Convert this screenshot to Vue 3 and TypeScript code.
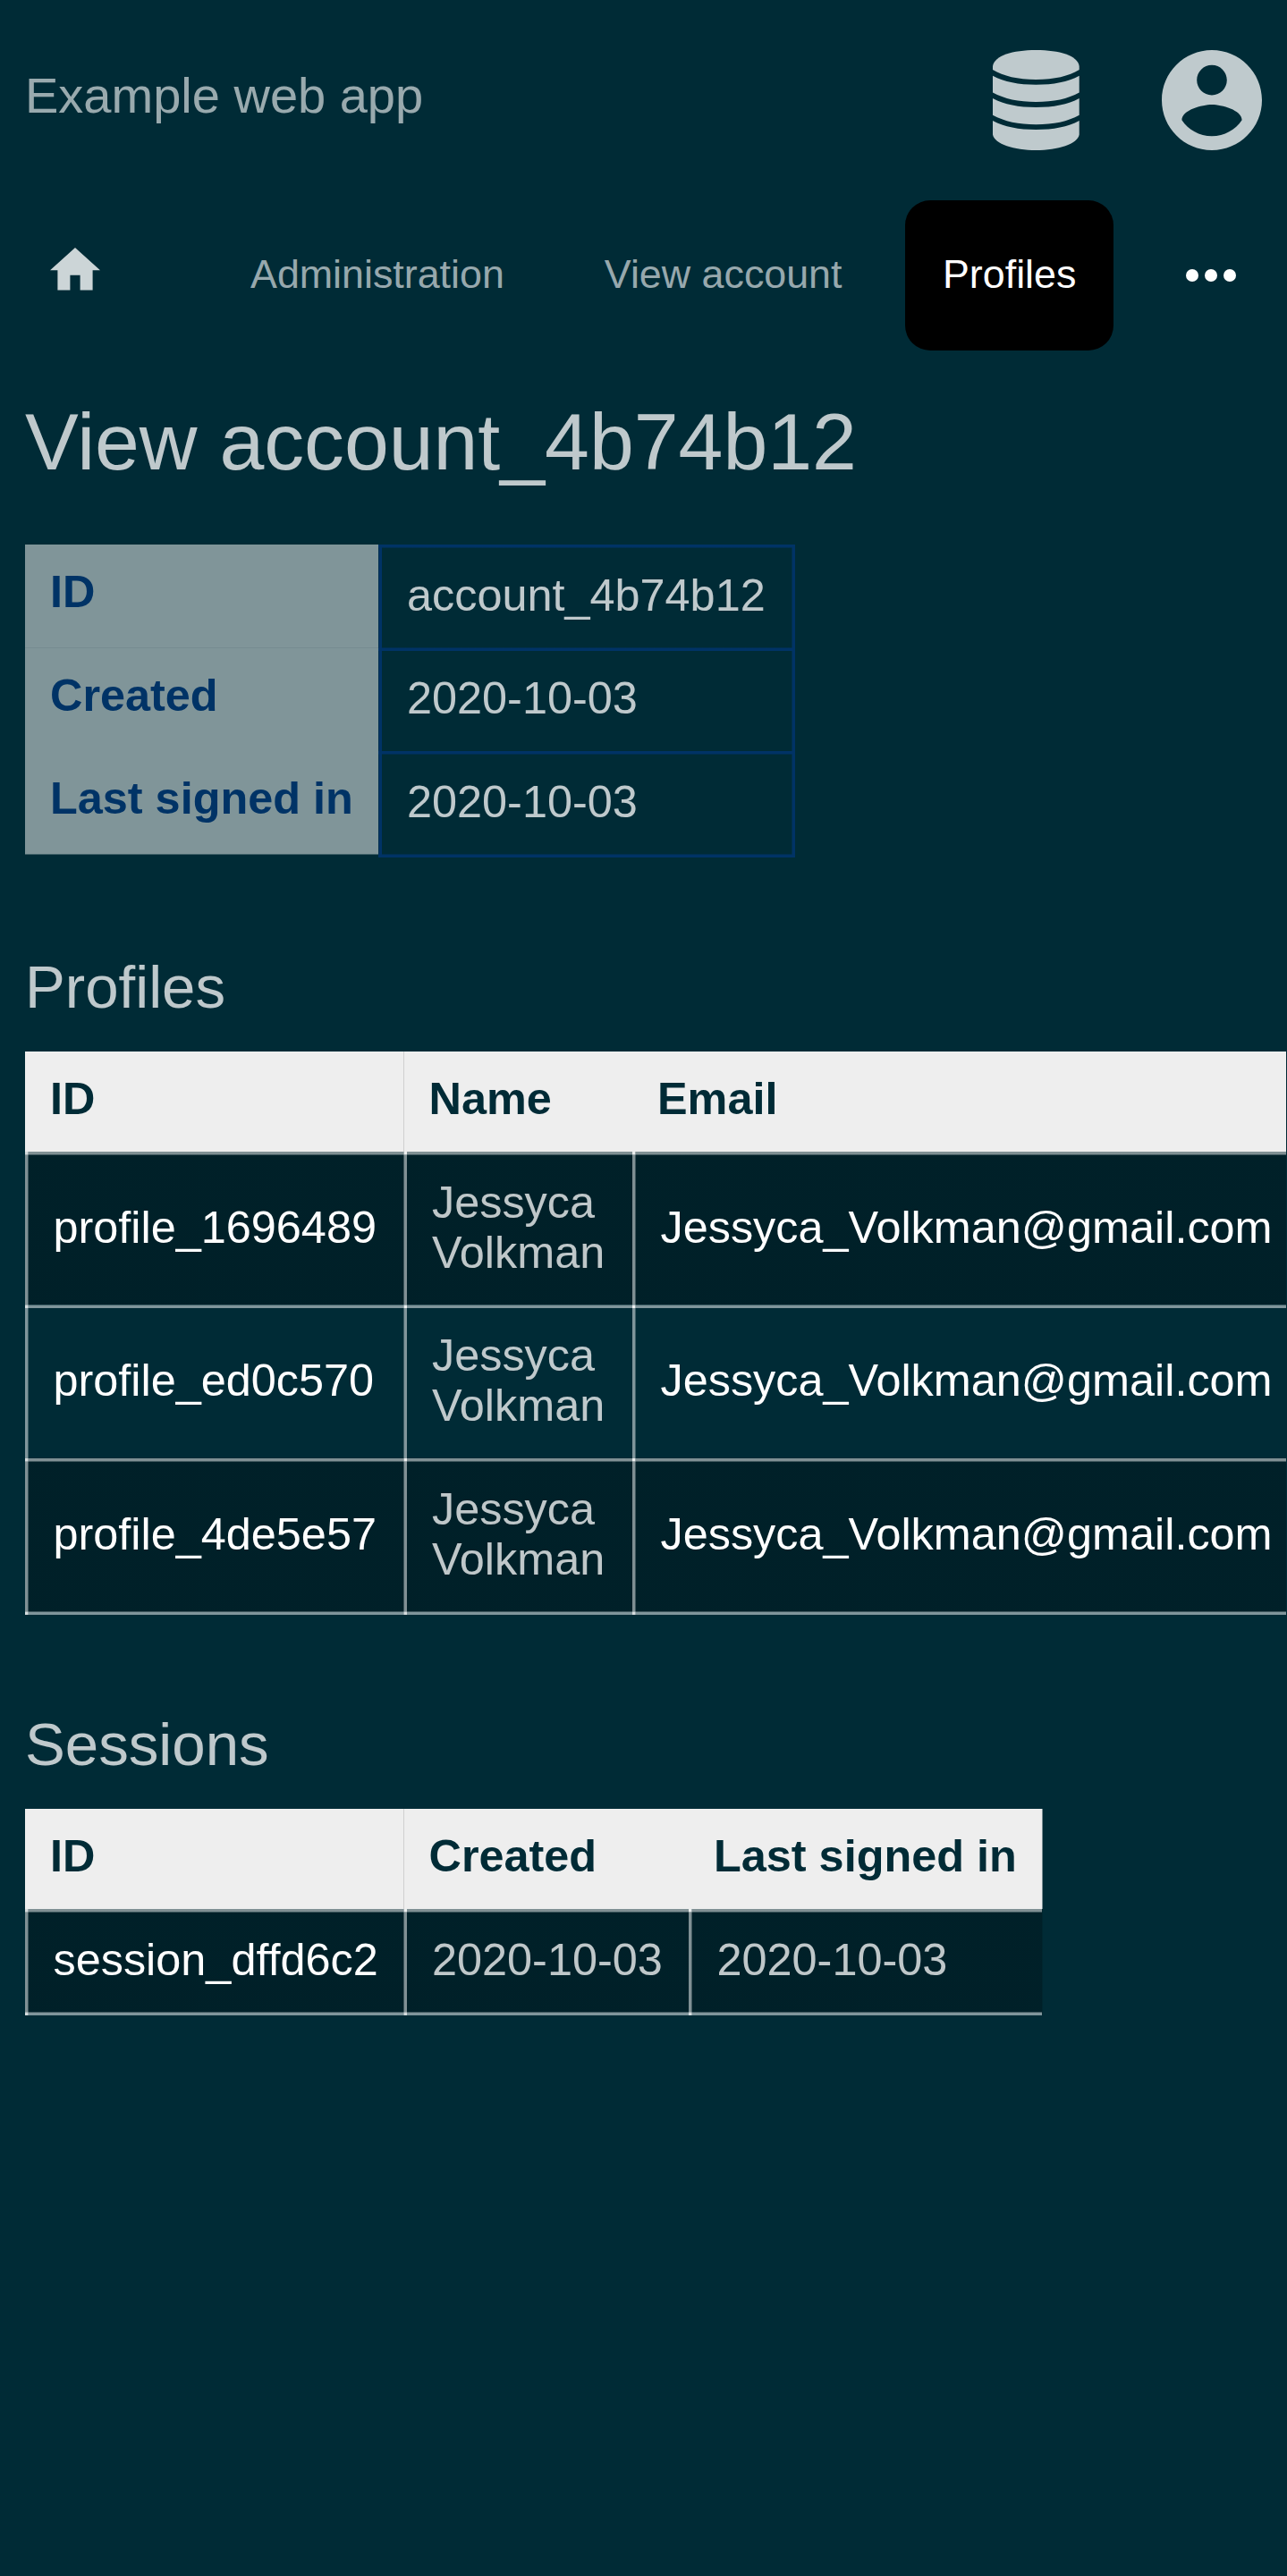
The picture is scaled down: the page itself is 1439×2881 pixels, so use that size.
<script setup lang="ts">
interface Row {
  edge: 'lead' | 'trail'
  height: string
  id: string
}
interface Profile extends Row {
  first: string
  last: string
  email: string
}

const tabs: { label: string; active: boolean }[] = [
  { label: 'Administration', active: false },
  { label: 'View account', active: false },
  { label: 'Profiles', active: true },
]

const details: { label: string; value: string; row: string }[] = [
  { label: 'ID', value: 'account_4b74b12', row: 'd1' },
  { label: 'Created', value: '2020-10-03', row: 'd2' },
  { label: 'Last signed in', value: '2020-10-03', row: 'd3' },
]

const profiles: Profile[] = [
  { id: 'profile_1696489', first: 'Jessyca', last: 'Volkman', email: 'Jessyca_Volkman@gmail.com', edge: 'lead', height: 'h171' },
  { id: 'profile_ed0c570', first: 'Jessyca', last: 'Volkman', email: 'Jessyca_Volkman@gmail.com', edge: 'trail', height: 'h172' },
  { id: 'profile_4de5e57', first: 'Jessyca', last: 'Volkman', email: 'Jessyca_Volkman@gmail.com', edge: 'lead', height: 'h175' },
]
</script>

<template>
  <div class="page">
    <header class="top">
      <div class="brand">Example web app</div>
      <svg class="db" width="97" height="112" viewBox="0 0 97 112">
        <path d="M0 18C2 6 22 0 48.400 0S95 6 96.700 18V22C85 29 69 33 48.400 33S12 29 0 22Z" />
        <path d="M0 28.700C13 35.500 29 38.700 48.400 38.700S84 35.500 96.700 28.700V47.500C84 54.500 68 58 48.400 58S13 54.500 0 47.500Z" />
        <path d="M0 53.900C13 60.700 29 63.900 48.400 63.900S84 60.700 96.700 53.900V72.700C84 79.700 68 83.200 48.400 83.200S13 79.700 0 72.700Z" />
        <path d="M0 79.100C13 85.900 29 89.100 48.400 89.100S84 85.900 96.700 79.100V94.500C95 105 73 112 48.400 112S2 105 0 94.500Z" />
      </svg>
      <svg class="user" width="112" height="112" viewBox="2 2 20 20">
        <path d="M12 2C6.480 2 2 6.480 2 12s4.480 10 10 10 10-4.480 10-10S17.520 2 12 2zm0 3c1.660 0 3 1.340 3 3s-1.340 3-3 3-3-1.340-3-3 1.340-3 3-3zm0 14.200c-2.500 0-4.710-1.280-6-3.220.03-1.990 4-3.080 6-3.080 1.990 0 5.970 1.090 6 3.080-1.290 1.940-3.500 3.220-6 3.220z" />
      </svg>
    </header>

    <nav class="nav">
      <svg class="home" width="56" height="47.600" viewBox="2 3 20 17">
        <path d="M10 20v-6h4v6h5v-8h3L12 3 2 12h3v8z" />
      </svg>
      <div class="tabs">
        <a v-for="t in tabs" :key="t.label" class="tab" :class="{ active: t.active }">{{ t.label }}</a>
      </div>
      <svg class="more" width="56" height="16" viewBox="0 0 56 16">
        <circle cx="7" cy="8" r="7" />
        <circle cx="28" cy="8" r="7" />
        <circle cx="49" cy="8" r="7" />
      </svg>
    </nav>

    <h1>View account_4b74b12</h1>

    <table class="details">
      <colgroup><col class="k" /><col class="v" /></colgroup>
      <tbody>
        <tr v-for="d in details" :key="d.label" :class="d.row">
          <th>{{ d.label }}</th>
          <td>{{ d.value }}</td>
        </tr>
      </tbody>
    </table>

    <h2 class="h-profiles">Profiles</h2>
    <table class="list profiles">
      <colgroup><col class="c1" /><col class="c2" /><col class="c3" /></colgroup>
      <thead>
        <tr><th>ID</th><th class="seam">Name</th><th>Email</th></tr>
      </thead>
      <tbody>
        <tr v-for="p in profiles" :key="p.id" :class="[p.edge, p.height]">
          <td class="a mid"><a>{{ p.id }}</a></td>
          <td class="b">{{ p.first }}<br />{{ p.last }}</td>
          <td class="a mid"><a>{{ p.email }}</a></td>
        </tr>
      </tbody>
    </table>

    <h2 class="h-sessions">Sessions</h2>
    <table class="list sessions">
      <colgroup><col class="c1" /><col class="c2" /><col class="c3" /></colgroup>
      <thead>
        <tr><th>ID</th><th class="seam">Created</th><th>Last signed in</th></tr>
      </thead>
      <tbody>
        <tr class="lead h119">
          <td class="a"><a>session_dffd6c2</a></td>
          <td class="b">2020-10-03</td>
          <td class="a">2020-10-03</td>
        </tr>
      </tbody>
    </table>
  </div>
</template>

<style>
body {
  margin: 0;
  background: #002b36;
}
</style>

<style scoped>
.page {
  box-sizing: border-box;
  width: 1439px;
  height: 2881px;
  padding: 0 0 0 28px;
  overflow: hidden;
  background: #002b36;
  color: rgba(255, 255, 255, 0.75);
  font: 50.4px/56px "Liberation Sans", Arial, sans-serif;
}
.top {
  display: flex;
  align-items: center;
  height: 224px;
}
.brand {
  flex: 1;
  margin-top: -11px;
  font-size: 56px;
  line-height: 64px;
  color: rgba(255, 255, 255, 0.6);
}
.top svg {
  fill: #bfcacd;
  display: block;
}
.db { margin-right: 91.5px; }
.user { margin-right: 28.5px; }
.nav {
  display: flex;
  height: 168px;
}
.home {
  margin: 53.4px 0 0 28px;
  fill: #ccd5d7;
}
.tabs {
  display: flex;
  gap: 28px;
  margin-left: 126px;
  width: 1008px;
}
.tab {
  box-sizing: border-box;
  height: 168px;
  padding: 54px 42px 0;
  border-radius: 28px;
  font-size: 44.8px;
  line-height: 56px;
  white-space: nowrap;
  color: rgba(255, 255, 255, 0.6);
}
.tab.active {
  margin-left: 0.5px;
  background: #000;
  color: #fff;
}
.more {
  margin-top: 76px;
  margin-left: 80px;
  fill: #fff;
}
h1, h2 {
  margin: 0;
  font-weight: 400;
  white-space: nowrap;
}
h1 {
  height: 217px;
  padding-top: 50px;
  box-sizing: border-box;
  font-size: 89.6px;
  line-height: 104px;
}
h2 {
  box-sizing: border-box;
  font-size: 67.2px;
  line-height: 78px;
}
.h-profiles, .h-sessions {
  height: 217px;
  padding-top: 106px;
}

table {
  table-layout: fixed;
  border-spacing: 0;
  border-collapse: separate;
}
th, td {
  box-sizing: border-box;
  padding: 29px 0 0;
  vertical-align: top;
  text-align: left;
  white-space: nowrap;
}
th {
  font-weight: 700;
  padding: 25px 0 0 28px;
}

/* account details */
.details { width: 861px; }
.k { width: 395px; }
.v { width: 466px; }
.details th {
  background: #809599;
  color: #003366;
}
.details td {
  --c: #003366;
  padding-left: 32px;
  background:
    linear-gradient(to right, rgba(0, 51, 102, 0.5) 1px, var(--c) 1px) 0 0 / 4px 100% no-repeat,
    linear-gradient(to right, rgba(0, 51, 102, 0.5) 1px, var(--c) 1px) 100% 0 / 4px 100% no-repeat,
    linear-gradient(var(--c) 3px, rgba(0, 51, 102, 0.5) 3px) 0 0 / 100% 4px no-repeat;
}
.d1 > * { height: 115px; }
.d2 > * { height: 116px; }
.d3 > * { height: 119px; }
.details .d2 th {
  padding-top: 26px;
  box-shadow: inset 0 1px 0 #768c91;
}
.details .d2 td {
  background:
    linear-gradient(to right, rgba(0, 51, 102, 0.5) 1px, var(--c) 1px) 0 0 / 4px 100% no-repeat,
    linear-gradient(to right, rgba(0, 51, 102, 0.5) 1px, var(--c) 1px) 100% 0 / 4px 100% no-repeat,
    linear-gradient(rgba(0, 51, 102, 0.5) 1px, var(--c) 1px) 0 0 / 100% 4px no-repeat;
}
.details .d3 th {
  background: linear-gradient(#809599 115px, #406068 115px, #406068 116px, transparent 116px);
}
.details .d3 td {
  background:
    linear-gradient(to right, rgba(0, 51, 102, 0.5) 1px, var(--c) 1px) 0 0 / 4px 100% no-repeat,
    linear-gradient(to right, rgba(0, 51, 102, 0.5) 1px, var(--c) 1px) 100% 0 / 4px 100% no-repeat,
    linear-gradient(var(--c) 3px, rgba(0, 51, 102, 0.5) 3px) 0 0 / 100% 4px no-repeat,
    linear-gradient(rgba(0, 51, 102, 0.5) 1px, var(--c) 1px) 0 100% / 100% 4px no-repeat;
}

/* record lists */
.list th {
  height: 112px;
  background: #eee;
  color: #002b36;
}
.list .seam {
  padding-left: 28.5px;
  background: linear-gradient(to right, #d0d0d0 1px, #eee 1px);
}
.profiles { width: 1410px; }
.sessions { width: 1137px; }
.c1 { width: 423px; }
.profiles .c2 { width: 256px; }
.profiles .c3 { width: 731px; }
.sessions .c2 { width: 319px; }
.sessions .c3 { width: 395px; }
.sessions th:last-child { box-shadow: 1px 0 0 #778d92; }
.sessions td:last-child { box-shadow: 1px 0 0 #00262f; }

.list a { color: #fff; }
.list td {
  --full: rgba(255, 255, 255, 0.5);
  --half: rgba(255, 255, 255, 0.25);
  --fill: rgba(0, 0, 0, 0.25);
  --foot: transparent;
  --top: linear-gradient(var(--full) 3px, var(--half) 3px);
  --ky: 0px;
  --side: linear-gradient(to right, var(--full) 3px, var(--half) 3px);
  --kx: 0px;
  --knot: rgba(255, 255, 255, 0.35);
  background:
    linear-gradient(var(--knot), var(--knot)) var(--kx) var(--ky) / 3px 3px no-repeat,
    var(--side) 0 0 / 4px 100% no-repeat,
    var(--top) 0 0 / 100% 4px no-repeat,
    linear-gradient(var(--fill), var(--fill)) 0 0 / 100% 100% no-repeat;
}
.list td.a { padding-left: 31.5px; }
.list td.b {
  padding-left: 32px;
  --side: linear-gradient(to right, var(--half) 1px, var(--full) 1px);
  --kx: 1px;
  --knot: rgba(255, 255, 255, 0.72);
}
.list td.a:last-child { --knot: rgba(255, 255, 255, 0.72); }
.list td.mid { padding-top: 57px; }
.list .trail > td {
  --fill: transparent;
  --top: linear-gradient(var(--half) 1px, var(--full) 1px);
  --ky: 1px;
}
.h171 > td { height: 171px; }
.h172 > td { height: 172px; }
.h175 > td { height: 175px; }
.h119 > td { height: 119px; }
.list .h175 > td, .list .h119 > td {
  --foot: rgba(255, 255, 255, 0.35);
  background:
    linear-gradient(var(--knot), var(--knot)) var(--kx) var(--ky) / 3px 3px no-repeat,
    linear-gradient(var(--foot), var(--foot)) var(--kx) 100% / 3px 3px no-repeat,
    var(--side) 0 0 / 4px 100% no-repeat,
    var(--top) 0 0 / 100% 4px no-repeat,
    linear-gradient(var(--half) 1px, var(--full) 1px) 0 100% / 100% 4px no-repeat,
    linear-gradient(to top, transparent 3px, var(--fill) 3px);
}
</style>
